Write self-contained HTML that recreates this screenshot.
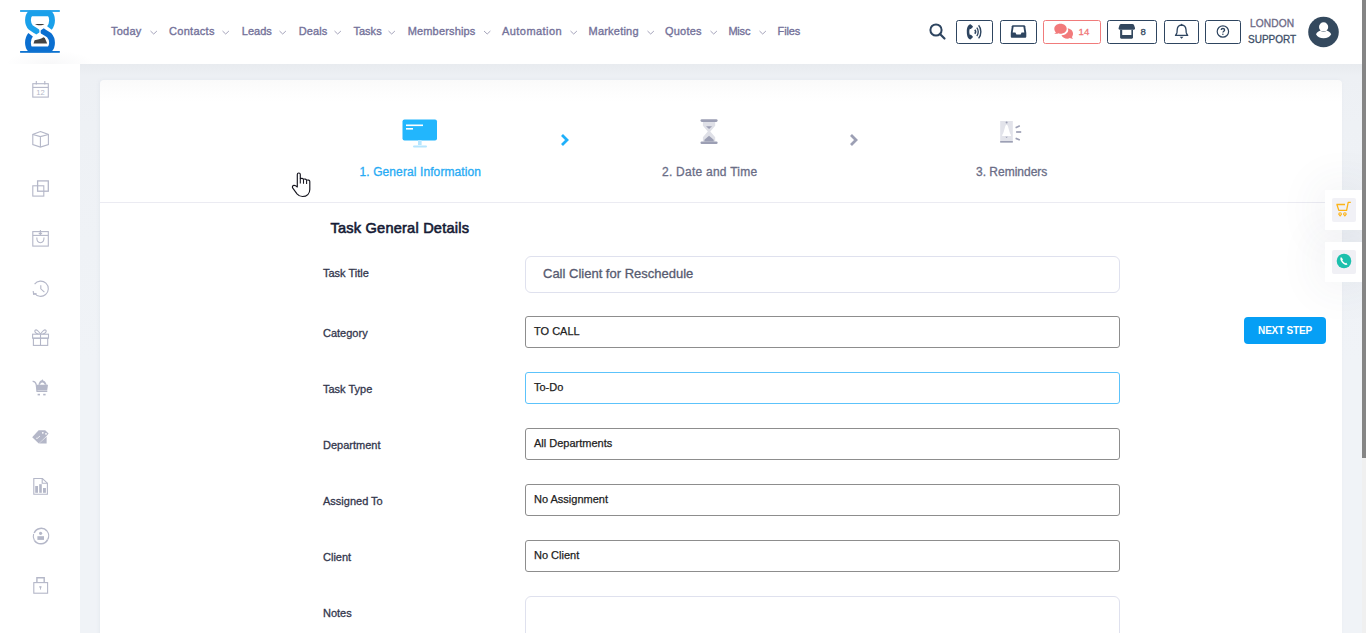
<!DOCTYPE html>
<html><head><meta charset="utf-8">
<style>
*{box-sizing:border-box;margin:0;padding:0}
html,body{width:1366px;height:633px;overflow:hidden;background:#fff;font-family:"Liberation Sans",sans-serif}
.abs{position:absolute}
#header{position:absolute;left:0;top:0;width:1362px;height:64px;background:#fff}
#main{position:absolute;left:80px;top:64px;width:1282px;height:569px;background:linear-gradient(#e8ebef 0,#edf0f4 12px,#eef1f5 60px,#f0f3f7 300px)}
#card{position:absolute;left:100px;top:80px;width:1242px;height:600px;background:linear-gradient(#fafafa,#fdfdfd 12px,#fff 22px);border-radius:4px;box-shadow:-1px 0 3px rgba(200,205,220,.25)}
#sb{position:absolute;left:1362px;top:0;width:4px;height:633px;background:#f0f0f0}
#thumb{position:absolute;left:1362px;top:0;width:4px;height:458px;background:#858585}
.nav{position:absolute;top:24px;font-size:11px;color:#74729a;white-space:nowrap;line-height:14px;-webkit-text-stroke:0.35px #74729a}
.chev{position:absolute;top:30px;width:7px;height:4px}
.hbtn{position:absolute;top:20px;height:24px;border:1.4px solid #2e4560;border-radius:2.5px}
.step{position:absolute;top:165px;font-size:12px;white-space:nowrap;line-height:14px;-webkit-text-stroke:0.3px currentColor}
.lbl{position:absolute;left:323px;font-size:11px;color:#33374d;white-space:nowrap;line-height:14px;-webkit-text-stroke:0.3px #33374d}
.sel{position:absolute;left:525px;width:595px;height:32px;border:1px solid #8d8d8d;border-radius:3px;font-size:11px;color:#222;padding-left:8px;line-height:28px;white-space:nowrap;-webkit-text-stroke:0.25px #222}
.sideic{position:absolute;left:31px;width:18px;height:18px}
</style></head><body>
<div id="header">
  <div class="abs" style="left:5px;top:50px;width:90px;height:28px;background:radial-gradient(ellipse 45px 14px at 45px 14px, rgba(40,50,80,.035), rgba(40,50,80,0))"></div>
  <!-- logo -->
  <svg class="abs" style="left:18px;top:8px" width="44" height="48" viewBox="0 0 44 48">
    <path d="M31.4 20 C35 15.5 34.8 8.5 31.6 5.4 L12.4 5.4 C9.2 8.5 9 15.5 12.8 19.6 C16 22.2 19 22.6 20.6 25" stroke="#1aa0ea" stroke-width="5.8" fill="none"/>
    <path d="M12.6 26.8 C9 31.3 9.2 38.3 12.4 41.4 L31.6 41.4 C34.8 38.3 35 31.3 31.2 27.2 C28 24.6 25 24.2 23.4 21.8" stroke="#0b6fd0" stroke-width="5.8" fill="none"/>
    <path d="M22 19.5 L22 27.5" stroke="#fff" stroke-width="1.3"/>
    <rect x="2.1" y="2.1" width="39.7" height="1.8" fill="#1ea0ea"/>
    <rect x="2.1" y="43" width="39.7" height="1.8" fill="#0d72cf"/>
    <path d="M17 16 C19 17.8 24.5 17.8 26.5 16 Z" fill="#3a3a3a"/>
    <path d="M15.5 35.6 L16.6 32.2 C19.5 31.5 22.5 31.3 25.5 29.2 L26.8 30 L29.2 35.6 Z" fill="#444"/>
  </svg>
  <div class="nav" style="left:111px;letter-spacing:0.25px">Today</div>
  <div class="nav" style="left:169px;letter-spacing:0.29px">Contacts</div>
  <div class="nav" style="left:241.8px;letter-spacing:0px">Leads</div>
  <div class="nav" style="left:298.7px;letter-spacing:0.1px">Deals</div>
  <div class="nav" style="left:353.4px;letter-spacing:0.03px">Tasks</div>
  <div class="nav" style="left:407.7px;letter-spacing:0.16px">Memberships</div>
  <div class="nav" style="left:502px;letter-spacing:0.44px">Automation</div>
  <div class="nav" style="left:588.5px;letter-spacing:0.22px">Marketing</div>
  <div class="nav" style="left:665px;letter-spacing:0.2px">Quotes</div>
  <div class="nav" style="left:728.4px;letter-spacing:-0.2px">Misc</div>
  <div class="nav" style="left:777.6px;letter-spacing:-0.15px">Files</div>
  <svg class="abs" style="left:0;top:0" width="800" height="64">
    <g fill="none" stroke="#9a98b2" stroke-width="0.9">
      <path d="M150.5 31 L153.7 34 L156.9 31"/>
      <path d="M222.5 31 L225.7 34 L228.9 31"/>
      <path d="M279.5 31 L282.7 34 L285.9 31"/>
      <path d="M334.5 31 L337.7 34 L340.9 31"/>
      <path d="M388.5 31 L391.7 34 L394.9 31"/>
      <path d="M484 31 L487.2 34 L490.4 31"/>
      <path d="M570.5 31 L573.7 34 L576.9 31"/>
      <path d="M647.5 31 L650.7 34 L653.9 31"/>
      <path d="M710.5 31 L713.7 34 L716.9 31"/>
      <path d="M759.5 31 L762.7 34 L765.9 31"/>
    </g>
  </svg>
  <!-- search -->
  <svg class="abs" style="left:928px;top:22px" width="20" height="20" viewBox="0 0 20 20">
    <circle cx="8" cy="8" r="5.6" fill="none" stroke="#2e4560" stroke-width="2"/>
    <path d="M12 12 L16.5 16.5" stroke="#2e4560" stroke-width="2.2" stroke-linecap="round"/>
  </svg>
  <div class="hbtn" style="left:956px;width:37px"></div>
  <div class="hbtn" style="left:1000px;width:37px"></div>
  <div class="hbtn" style="left:1043px;width:58px;border-color:#f07b7b"></div>
  <div class="hbtn" style="left:1107px;width:50px"></div>
  <div class="hbtn" style="left:1164px;width:35px"></div>
  <div class="hbtn" style="left:1205px;width:36px"></div>

  <!-- header button icons -->
  <svg class="abs" style="left:956px;top:20px" width="37" height="24" viewBox="0 0 37 24">
    <path d="M14.5 4.2 C12.5 4.6 10.8 6.5 10.8 11.8 C10.8 17 12.5 19.2 14.5 19.6 L16.6 17.6 C17 17.2 17 16.6 16.6 16.2 L15.2 14.9 C14.8 14.6 14.3 14.7 13.9 14.9 C13.2 13.5 13 10.5 13.8 8.8 C14.2 9 14.7 9.1 15.1 8.8 L16.5 7.5 C17 7.1 17 6.5 16.6 6.1 Z" fill="#2e4560"/>
    <path d="M18.8 9.8 C19.7 10.8 19.7 12.7 18.8 13.7" fill="none" stroke="#2e4560" stroke-width="1.5"/>
    <path d="M20.8 7.6 C22.7 9.8 22.7 13.8 20.8 16" fill="none" stroke="#2e4560" stroke-width="1.4"/>
    <path d="M22.6 5.2 C25.6 8.6 25.6 15 22.6 18.4" fill="none" stroke="#2e4560" stroke-width="1.4"/>
  </svg>
  <svg class="abs" style="left:1000px;top:20px" width="37" height="24" viewBox="0 0 37 24">
    <path d="M13.2 5.2 L23.8 5.2 C24.6 5.2 25 5.6 25.2 6.3 L26.3 13 L26.3 16.5 C26.3 17.3 25.7 17.8 25 17.8 L12 17.8 C11.3 17.8 10.8 17.3 10.8 16.5 L10.8 13 L11.8 6.3 C12 5.6 12.4 5.2 13.2 5.2 Z" fill="#2e4560"/>
    <path d="M13.6 6.8 L23.4 6.8 L24.3 12.6 L21.6 12.6 L20.6 14.4 L16.4 14.4 L15.4 12.6 L12.7 12.6 Z" fill="#fff"/>
  </svg>
  <svg class="abs" style="left:1043px;top:20px" width="58" height="24" viewBox="0 0 58 24">
    <path d="M17.5 3.8 C13.8 3.8 11.3 6 11.3 8.8 C11.3 10.3 11.9 11.6 13 12.5 L11.2 13.8 C13.2 14 14.8 13.5 15.8 13.2 C16.4 13.5 17 13.8 17.5 13.8 C21.2 13.8 23.7 11.6 23.7 8.8 C23.7 6 21.2 3.8 17.5 3.8 Z" fill="#f27a7b"/>
    <path d="M24.6 8.6 C27.8 8.6 30 11 30 13.7 C30 15 29.5 16.2 28.8 17 L30 18.7 C28.6 18.6 27.6 18.3 26.8 18 C26.1 18.5 25.2 18.8 24.4 18.8 C21.6 18.8 19.6 17.3 18.4 15.3 C21 15.3 23.5 14 24.8 12 C25.4 11 25.5 9.8 24.6 8.6 Z" fill="#f27a7b"/>
    <path d="M17 15 C20.5 14.6 23 13 24.2 10.5" fill="none" stroke="#fff" stroke-width="0.8"/>
    <text x="35.6" y="14.8" font-family="Liberation Sans" font-size="9.6" fill="#f07676" stroke="#f07676" stroke-width="0.3">14</text>
  </svg>
  <svg class="abs" style="left:1107px;top:20px" width="50" height="24" viewBox="0 0 50 24">
    <path d="M14.2 4 L25.4 4 C26.2 4 26.7 4.4 27 5 L28 8 C28.2 9 27.6 9.7 26.8 9.7 L12.8 9.7 C12 9.7 11.4 9 11.6 8 L12.6 5 C12.9 4.4 13.4 4 14.2 4 Z" fill="#33485f"/>
    <path d="M13.1 9.7 L13.1 17.6 C13.1 18.3 13.6 18.8 14.3 18.8 L24.8 18.8 C25.5 18.8 26 18.3 26 17.6 L26 9.7 L24.4 9.7 L24.4 15 L15.2 15 L15.2 9.7 Z" fill="#33485f"/>
    <text x="33.6" y="14.8" font-family="Liberation Sans" font-size="9.6" fill="#33485f" stroke="#33485f" stroke-width="0.3">8</text>
  </svg>
  <svg class="abs" style="left:1164px;top:20px" width="35" height="24" viewBox="0 0 35 24">
    <path d="M17.6 5 C14.8 5.1 13.4 7.2 13.2 9.6 L13 12.4 C12.8 13.6 12.2 14.6 11.5 15.4 L23.7 15.4 C23 14.6 22.4 13.6 22.2 12.4 L22 9.6 C21.8 7.2 20.4 5.1 17.6 5 Z" fill="none" stroke="#2e4560" stroke-width="1.3" stroke-linejoin="round"/>
    <path d="M15.7 16.7 L19.5 16.7 L17.6 18.7 Z" fill="#2e4560"/>
    <circle cx="17.6" cy="4.6" r="0.8" fill="#2e4560"/>
  </svg>
  <svg class="abs" style="left:1205px;top:20px" width="36" height="24" viewBox="0 0 36 24">
    <circle cx="17.9" cy="11.5" r="5.7" fill="none" stroke="#2e4560" stroke-width="1.2"/>
    <path d="M16.2 10.1 C16.2 9 16.9 8.5 17.9 8.5 C18.9 8.5 19.6 9.1 19.6 10 C19.6 11.2 17.9 11.2 17.9 12.6" fill="none" stroke="#2e4560" stroke-width="1.3"/>
    <circle cx="17.9" cy="14.3" r="0.75" fill="#2e4560"/>
  </svg>
  <div class="abs" style="left:1250px;top:18px;font-size:10.2px;color:#6d6a86;line-height:12px;-webkit-text-stroke:0.3px #6d6a86;letter-spacing:0.1px">LONDON</div>
  <div class="abs" style="left:1248px;top:34px;font-size:10px;color:#3d4f68;line-height:12px;-webkit-text-stroke:0.3px #3d4f68">SUPPORT</div>
  <svg class="abs" style="left:1308px;top:16px" width="32" height="32" viewBox="0 0 32 32">
    <circle cx="15.5" cy="15.95" r="15.3" fill="#34495e"/>
    <circle cx="15.6" cy="10.9" r="4.6" fill="#fff"/>
    <path d="M8 18.2 C9 16.2 11 15 12.6 14.6 C13.5 15.6 14.5 16 15.6 16 C16.7 16 17.7 15.6 18.6 14.6 C20.2 15 22.2 16.2 23.2 18.2 C22 20.8 19 22.3 15.6 22.3 C12.2 22.3 9.2 20.8 8 18.2 Z" fill="#fff"/>
  </svg>
</div>
<div id="main"></div>
<div id="card"></div>
<div class="abs" style="left:100px;top:202px;width:1242px;height:1px;background:#ebebf2"></div>

<!-- steps -->
<svg class="abs" style="left:402px;top:119px" width="36" height="30" viewBox="0 0 36 30">
  <rect x="0.5" y="0.5" width="34.5" height="21" rx="2" fill="#22b6fd"/>
  <rect x="4" y="5.5" width="17" height="1.6" fill="#fff"/>
  <rect x="4" y="9" width="7" height="1.6" fill="#fff"/>
  <rect x="16" y="21" width="3.6" height="5" fill="#b5e5fe"/>
  <rect x="11" y="26.5" width="14" height="2" rx="1" fill="#b5e5fe"/>
</svg>
<div class="step" style="left:359.5px;color:#27abf4;letter-spacing:0.1px">1. General Information</div>
<svg class="abs" style="left:558px;top:132px" width="14" height="16" viewBox="0 0 14 16">
  <path d="M4 3 L9 8 L4 13" fill="none" stroke="#1fb0fa" stroke-width="2.8"/>
</svg>
<svg class="abs" style="left:700px;top:119px" width="18" height="26" viewBox="0 0 18 26">
  <path d="M2.9 2.5 L15.2 2.5 L15.2 6.8 L10.3 12.5 L15.2 18.2 L15.2 22.5 L2.9 22.5 L2.9 18.2 L7.8 12.5 L2.9 6.8 Z" fill="#dfe0e7"/>
  <rect x="0.5" y="0.2" width="17.1" height="2.7" rx="1.3" fill="#9c9fb4"/>
  <rect x="0.5" y="22.4" width="17.1" height="2.5" rx="1.2" fill="#9c9fb4"/>
  <path d="M6 7.3 L12.1 7.3 L9.05 9.9 Z" fill="#9c9fb4"/>
  <path d="M4.4 22.5 L4.4 20.8 L9.05 16.8 L13.7 20.8 L13.7 22.5 Z" fill="#9c9fb4"/>
</svg>
<div class="step" style="left:662px;color:#6a6d86;letter-spacing:0.25px">2. Date and Time</div>
<svg class="abs" style="left:847px;top:132px" width="14" height="16" viewBox="0 0 14 16">
  <path d="M4 3 L9 8 L4 13" fill="none" stroke="#9c9fb4" stroke-width="2.8"/>
</svg>
<svg class="abs" style="left:1000px;top:121px" width="22" height="22" viewBox="0 0 22 22">
  <rect x="0.2" y="0" width="12.6" height="21.5" fill="#e2e3ea"/>
  <rect x="0.2" y="20" width="12.6" height="1.6" fill="#9c9fb4"/>
  <path d="M6.6 3.8 C6 3.8 5.6 4.5 5.2 5.6 L3.8 10.5 C3.5 11.8 3 12.8 2.2 14 L2.2 15 L11 15 L11 14 C10.2 12.8 9.7 11.8 9.4 10.5 L8 5.6 C7.6 4.5 7.2 3.8 6.6 3.8 Z" fill="#fff"/>
  <circle cx="6.6" cy="1.6" r="1" fill="#9c9fb4"/>
  <path d="M5.4 15.8 L7.8 15.8 L6.6 17 Z" fill="#9c9fb4"/>
  <path d="M15.6 6.8 L19.8 4.8" stroke="#9c9fb4" stroke-width="1.7"/>
  <path d="M16 11 L21.2 11" stroke="#9c9fb4" stroke-width="1.7"/>
  <path d="M15.6 17.2 L19.8 19.1" stroke="#9c9fb4" stroke-width="1.7"/>
</svg>
<div class="step" style="left:976px;color:#6a6d86">3. Reminders</div>

<!-- form -->
<div class="abs" style="left:330.5px;top:218.5px;font-size:14.6px;color:#161b35;line-height:18px;white-space:nowrap;-webkit-text-stroke:0.6px #161b35;letter-spacing:0.2px">Task General Details</div>
<div class="lbl" style="top:266px">Task Title</div>
<div class="abs" style="left:525px;top:256px;width:595px;height:37px;border:1px solid #dfe1ee;border-radius:6px;font-size:13px;color:#575b70;padding-left:17px;line-height:34px;white-space:nowrap;-webkit-text-stroke:0.3px #575b70">Call Client for Reschedule</div>
<div class="lbl" style="top:326px">Category</div>
<div class="sel" style="top:316px">TO CALL</div>
<div class="lbl" style="top:382px">Task Type</div>
<div class="sel" style="top:372px;border-color:#5cc3fb">To-Do</div>
<div class="lbl" style="top:438px">Department</div>
<div class="sel" style="top:428px">All Departments</div>
<div class="lbl" style="top:494px">Assigned To</div>
<div class="sel" style="top:484px">No Assignment</div>
<div class="lbl" style="top:550px">Client</div>
<div class="sel" style="top:540px">No Client</div>
<div class="lbl" style="top:606px">Notes</div>
<div class="abs" style="left:525px;top:596px;width:595px;height:60px;border:1px solid #dfe1ee;border-radius:6px"></div>

<div class="abs" style="left:1244px;top:317px;width:82px;height:27px;background:#069ff5;border-radius:4px;color:#fff;font-size:10px;font-weight:700;line-height:27px;text-align:center;letter-spacing:-0.2px">NEXT STEP</div>

<!-- side widgets -->
<div class="abs" style="left:1325px;top:190px;width:37px;height:40px;box-shadow:0 0 45px 6px rgba(60,70,100,.07)"></div>
<div class="abs" style="left:1325px;top:242px;width:37px;height:40px;box-shadow:0 0 45px 6px rgba(60,70,100,.07)"></div>
<div class="abs" style="left:1325px;top:190px;width:37px;height:40px;background:#fff"></div>
<div class="abs" style="left:1332px;top:198px;width:23.5px;height:23.5px;background:#f1f1f6;border-radius:2px"></div>
<svg class="abs" style="left:1328px;top:194px" width="34" height="32" viewBox="0 0 34 32">
  <path d="M8.4 10.5 L17 10.5 M8.9 10.5 L10.8 16.4 L18.6 16.4 L20.2 8.4 L22.8 8.4" fill="none" stroke="#fcb316" stroke-width="1.3" stroke-linejoin="round"/>
  <path d="M10.8 20.2 C10.8 19.3 11.4 18.8 12.1 18.8 C12.8 18.8 13.4 19.3 13.4 20.2 L12.1 21.8 Z" fill="none" stroke="#fcb316" stroke-width="1.1"/>
  <path d="M15.6 20.2 C15.6 19.3 16.2 18.8 16.9 18.8 C17.6 18.8 18.2 19.3 18.2 20.2 L16.9 21.8 Z" fill="none" stroke="#fcb316" stroke-width="1.1"/>
</svg>
<div class="abs" style="left:1325px;top:242px;width:37px;height:40px;background:#fff"></div>
<div class="abs" style="left:1332px;top:250px;width:24px;height:24px;background:#f0f0f5;border-radius:2px"></div>
<svg class="abs" style="left:1336px;top:253px" width="16" height="16" viewBox="0 0 16 16">
  <circle cx="8" cy="8" r="7.3" fill="#1cc0ad"/>
  <path d="M5 4 C4 5 4 7 6 9.5 C8 11.8 10 12.5 11.5 11.5 L10.3 9.8 L9.2 10.3 C8 9.5 7 8.5 6.3 7.2 L7 6.3 Z" fill="#fff"/>
</svg>

<svg class="abs" style="left:288px;top:168px" width="30" height="32" viewBox="0 0 30 32">
  <path d="M9.3 19 L9.3 6.5 C9.3 5.6 10 5 10.8 5 C11.6 5 12.3 5.6 12.3 6.5 L12.3 10.6 C13.5 10.2 15 10.4 15.5 11.2 C16.5 10.8 18.2 11 18.6 12.2 C20 11.6 21.8 12.2 21.8 13.5 L21.8 21.5 C21.8 25.5 19 28.5 14.5 28.5 C12 28.5 10.5 27.5 9 25.8 L4.8 20.2 C4 19.2 4.4 17.7 5.8 17.4 C7 17.2 8.2 18 9.3 19 Z" fill="#fff" stroke="#15151f" stroke-width="1.15" stroke-linejoin="round"/>
  <path d="M12.3 10.6 L12.3 15.6 M15.5 11.2 L15.5 15.8 M18.6 12.2 L18.6 16" fill="none" stroke="#15151f" stroke-width="1.05"/>
</svg>
<div id="sb"></div>
<div id="thumb"></div>

<!-- sidebar icons -->
<div class="abs" style="left:0;top:64px;width:80px;height:569px;background:#fff"></div>
<svg class="abs" style="left:30px;top:78px" width="22" height="22" viewBox="0 0 22 22"><g fill="none" stroke="#b4b7c8" stroke-width="1.1"><rect x="2.8" y="5.7" width="15.5" height="13.4"/><path d="M2.8 9.4 L18.3 9.4"/><path d="M6.3 3.1 L6.3 6.6 M14.8 3.1 L14.8 6.6"/><text x="10.6" y="17" font-family="Liberation Sans" font-size="7.6" fill="#b4b7c8" stroke="none" text-anchor="middle">12</text></g></svg>
<svg class="abs" style="left:30px;top:128px" width="22" height="22" viewBox="0 0 22 22"><g fill="none" stroke="#b4b7c8" stroke-width="1.1"><path d="M10.4 3.6 L18.4 6.5 L18.4 16.5 L10.4 19.1 L2.8 16.5 L2.8 6.5 Z"/><path d="M2.8 6.5 L10.4 8.6 L18.4 6.5 M10.4 8.6 L10.4 19.1"/></g></svg>
<svg class="abs" style="left:30px;top:177px" width="22" height="22" viewBox="0 0 22 22"><g fill="none" stroke="#b4b7c8" stroke-width="1.1"><rect x="7.6" y="3.9" width="10.7" height="10.3" stroke-width="1.3"/><rect x="2.8" y="8.8" width="11" height="10.3"/></g></svg>
<svg class="abs" style="left:30px;top:227px" width="22" height="22" viewBox="0 0 22 22"><g fill="none" stroke="#b4b7c8" stroke-width="1.1"><rect x="2.8" y="4.6" width="15.5" height="14.5"/><path d="M2.8 8.4 L18.3 8.4"/><path d="M10.4 3 L10.4 7.2 M8.8 5.8 L10.4 7.4 L12 5.8"/><path d="M6.8 10.6 C6.8 17.5 14 17.5 14 10.6"/></g></svg>
<svg class="abs" style="left:30px;top:277px" width="22" height="22" viewBox="0 0 22 22"><g fill="none" stroke="#b4b7c8" stroke-width="1.1"><path d="M4.6 7.2 A7.6 7.6 0 1 1 4.4 16"/><path d="M3.2 14 L3.6 17.4 L6.6 16.6" stroke-linejoin="round"/><path d="M10.8 8.2 L10.8 11.8 L14.4 15.2"/></g></svg>
<svg class="abs" style="left:30px;top:326px" width="22" height="22" viewBox="0 0 22 22"><g fill="none" stroke="#b4b7c8" stroke-width="1.1"><rect x="2.6" y="8.2" width="15.9" height="4"/><rect x="3.4" y="12.2" width="14.3" height="7.2"/><path d="M10.5 8.2 L10.5 19.4"/><path d="M10.4 8 C8.5 5 6.5 3.2 5.2 4.2 C4 5.2 5.5 7.5 8.5 8 M10.6 8 C12.5 5 14.5 3.2 15.8 4.2 C17 5.2 15.5 7.5 12.5 8"/></g></svg>
<svg class="abs" style="left:30px;top:376px" width="22" height="22" viewBox="0 0 22 22"><path d="M2.6 5.4 C4.8 5.2 5.7 6.2 6.2 8.5 L7 15.4 L17.3 15.4" fill="none" stroke="#b4b7c8" stroke-width="1.2"/><path d="M6.2 8.8 L18 8.8 L17.2 14.4 L7 14.4 Z" fill="#b4b7c8"/><path d="M8.4 8.8 C9 6 10 4.8 11.3 4.6 L12.4 3.2 L13.5 4.8 C14.6 5 15.4 6 16 7.3 L16.8 8.8 L14.8 8.8 C14.4 7.5 13.5 6.4 12.3 6.4 C11 6.4 10.3 7.6 10 8.8 Z" fill="#b4b7c8"/><rect x="7.6" y="17.8" width="2.4" height="1.6" fill="#b4b7c8"/><rect x="13.2" y="17.8" width="2.4" height="1.6" fill="#b4b7c8"/></svg>
<svg class="abs" style="left:30px;top:426px" width="22" height="22" viewBox="0 0 22 22"><path d="M9 17.6 L16.6 17.6 L16.6 10.8 Z" fill="#b4b7c8"/><path d="M2.2 11.2 L8.6 4.2 L15.2 4.2 L18.6 7.6 L16.8 9.8 L8.8 17.6 Z" fill="#b4b7c8"/><circle cx="12.8" cy="6.8" r="0.9" fill="#fff"/><circle cx="16" cy="7.8" r="0.9" fill="#fff"/><path d="M7.2 11.8 C6 12.2 6.6 12.8 7.6 12.2 C8.6 11.2 9.4 10.4 10 10" stroke="#fff" stroke-width="0.8" fill="none"/></svg>
<svg class="abs" style="left:30px;top:475px" width="22" height="22" viewBox="0 0 22 22"><path d="M3.8 3.5 L12.4 3.5 L17.4 8.2 L17.4 19.2 L3.8 19.2 Z" fill="none" stroke="#b4b7c8" stroke-width="1.1"/><path d="M12.2 3.5 L12.2 8.3 L17.4 8.3" fill="none" stroke="#b4b7c8" stroke-width="1.1"/><rect x="5.2" y="11" width="2.8" height="6.8" fill="#b4b7c8"/><rect x="9.2" y="9.2" width="2.6" height="8.6" fill="#b4b7c8"/><rect x="13" y="13" width="2.9" height="4.8" fill="#b4b7c8"/></svg>
<svg class="abs" style="left:30px;top:525px" width="22" height="22" viewBox="0 0 22 22"><path d="M4.2 8 A7.6 7.6 0 0 1 17 6" fill="none" stroke="#b4b7c8" stroke-width="1.5"/><path d="M17.6 14.6 A7.6 7.6 0 0 1 4.4 15.4" fill="none" stroke="#b4b7c8" stroke-width="1.5"/><path d="M3.6 9 A7.6 7.6 0 0 0 4.4 15.4 M17.6 14.6 A7.6 7.6 0 0 0 17 6" fill="none" stroke="#b4b7c8" stroke-width="1.1"/><circle cx="10.6" cy="8.3" r="1.6" fill="#b4b7c8"/><rect x="7.4" y="11.2" width="6.6" height="3.7" fill="#b4b7c8"/></svg>
<svg class="abs" style="left:30px;top:574px" width="22" height="22" viewBox="0 0 22 22"><path d="M6.9 8.2 L6.9 3.8 L14.2 3.8 L14.2 8.2" fill="none" stroke="#b4b7c8" stroke-width="1.4"/><rect x="3.8" y="8.6" width="13.8" height="10.6" fill="none" stroke="#b4b7c8" stroke-width="1.1"/><rect x="9.3" y="12.2" width="2.2" height="1.4" fill="#b4b7c8"/><rect x="10" y="13" width="0.9" height="2.6" fill="#b4b7c8"/></svg>
</body></html>
